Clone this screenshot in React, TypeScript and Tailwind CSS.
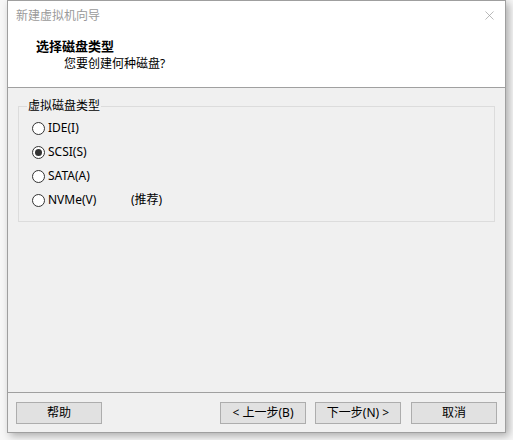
import React from 'react';
import { X } from 'lucide-react';

const font = { fontFamily: "'Noto Sans', 'Noto Sans CJK SC', sans-serif" };

const options = [
  { label: 'IDE(I)', checked: false },
  { label: 'SCSI(S)', checked: true },
  { label: 'SATA(A)', checked: false },
  { label: 'NVMe(V)', checked: false, note: '(推荐)' },
];

function Radio({ checked }: { checked: boolean }) {
  return (
    <span className="w-[13px] h-[13px] rounded-full border border-[#333] bg-white flex items-center justify-center shrink-0">
      {checked && <span className="w-[7px] h-[7px] rounded-full bg-[#333]" />}
    </span>
  );
}

function Button({ children }: { children: React.ReactNode }) {
  return (
    <button className="w-[86px] h-[22px] bg-[#e1e1e1] border border-[#adadad] text-[12px] text-black flex items-center justify-center">
      {children}
    </button>
  );
}

export default function App() {
  return (
    <div className="w-[513px] h-[440px] bg-[#f7f7f7] pl-[7px] overflow-hidden" style={font}>
      <div className="w-[499px] h-[433px] border border-[#9f9f9f] bg-[#f0f0f0] flex flex-col shadow-[3px_3px_8px_rgba(0,0,0,0.3)]">
        {/* Title + header */}
        <div className="h-[87px] bg-white border-b border-[#a0a0a0] flex flex-col">
          <div className="h-[29px] flex items-center justify-between pl-[8px] pr-[8px]">
            <span className="text-[12px] text-[#9a9a9a]">新建虚拟机向导</span>
            <X className="w-[15px] h-[15px] text-[#9a9a9a]" strokeWidth={1.1} />
          </div>
          <div className="mt-[7px] pl-[28px] text-[13px] leading-[18px] font-bold text-black">选择磁盘类型</div>
          <div className="pl-[56px] text-[12px] leading-[18px] text-black">您要创建何种磁盘?</div>
        </div>

        {/* Body */}
        <div className="h-[304px] px-[10px] pt-[18px]">
          <div className="relative h-[116px] border border-[#dcdcdc] pt-[9px] pl-[13px]">
            <span className="absolute left-[8px] top-[-9px] px-[1px] bg-[#f0f0f0] text-[12px] leading-[16px] text-black">虚拟磁盘类型</span>
            {options.map((o) => (
              <div key={o.label} className="h-[24px] flex items-center gap-[3px] text-[12px] text-black">
                <Radio checked={o.checked} />
                <span className="w-[80px]">{o.label}</span>
                {o.note && <span>{o.note}</span>}
              </div>
            ))}
          </div>
        </div>

        {/* Footer */}
        <div className="flex-1 border-t border-[#a0a0a0] pt-[9px] px-[8px] flex items-start">
          <Button>帮助</Button>
          <div className="ml-auto flex gap-[9px]">
            <Button>&lt; 上一步(B)</Button>
            <Button>下一步(N) &gt;</Button>
            <div className="ml-[1px]">
              <Button>取消</Button>
            </div>
          </div>
        </div>
      </div>
    </div>
  );
}
